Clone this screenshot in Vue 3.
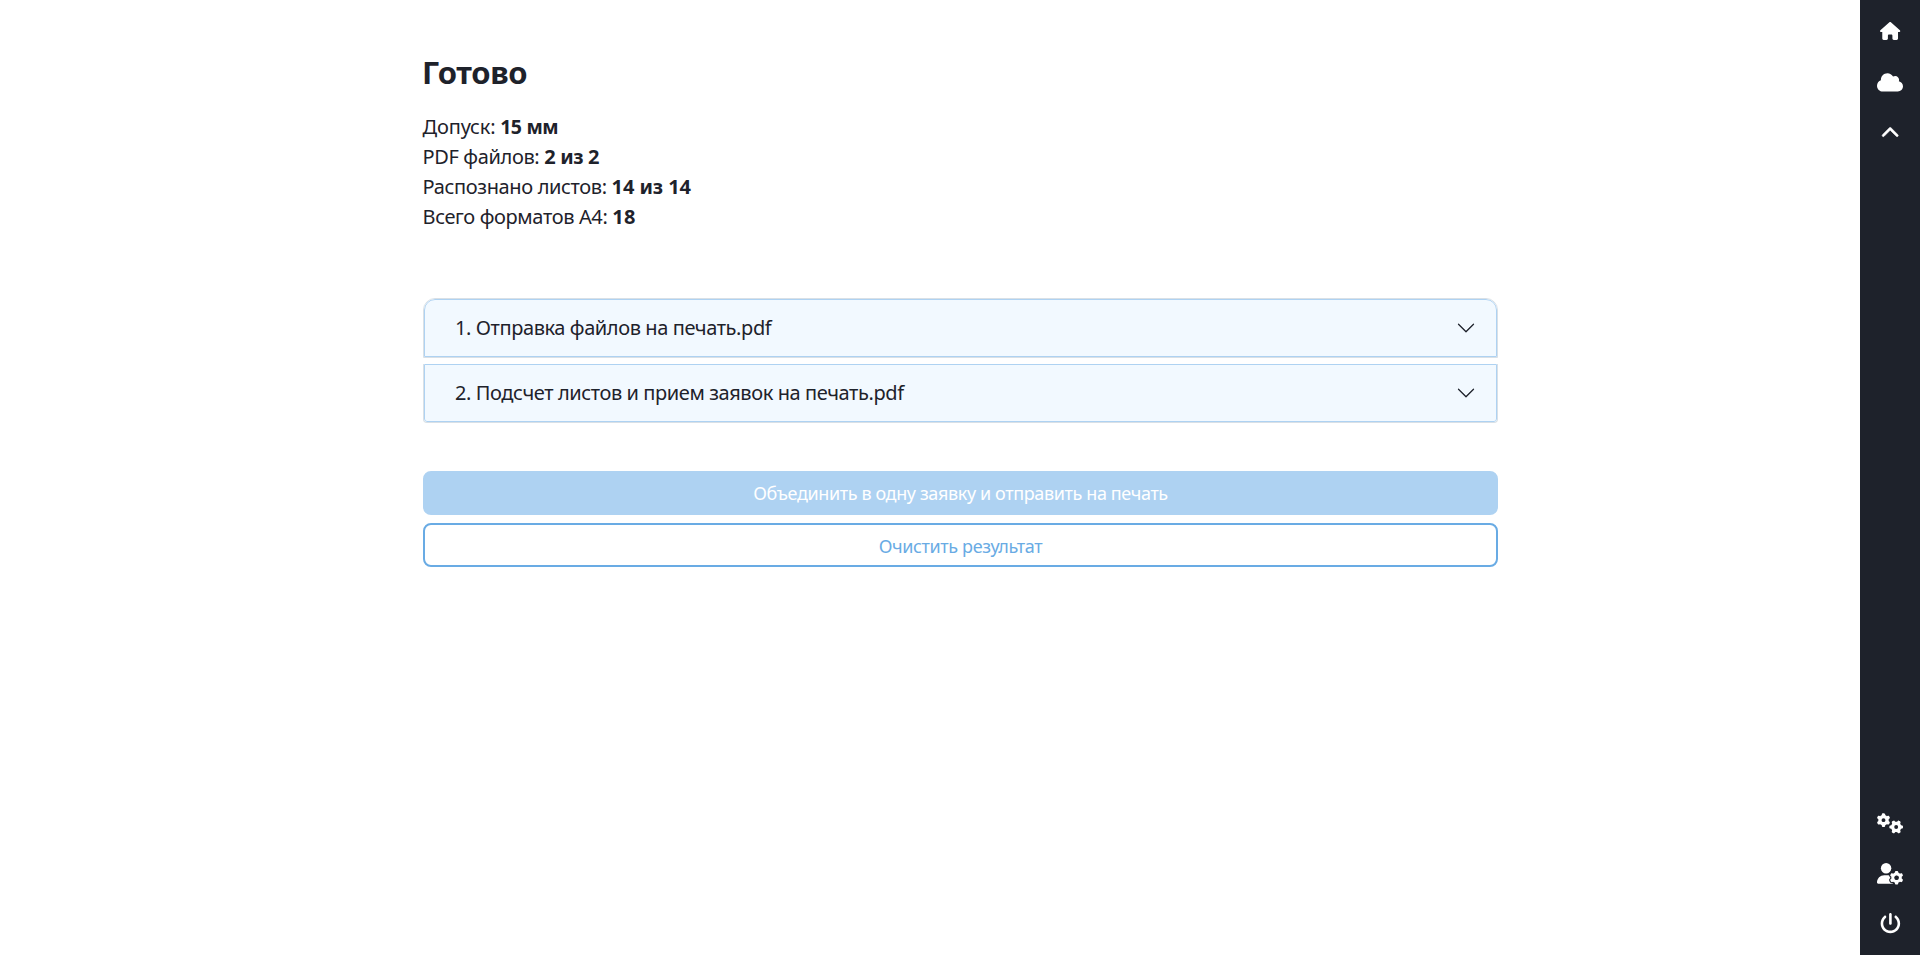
<script setup>
const stats = [
  { label: 'Допуск:', value: '15 мм', cls: 'tolerance' },
  { label: 'PDF файлов:', value: '2 из 2', cls: 'pdfs' },
  { label: 'Распознано листов:', value: '14 из 14', cls: 'sheets' },
  { label: 'Всего форматов А4:', value: '18', cls: 'formats' },
]
const files = ['1. Отправка файлов на печать.pdf', '2. Подсчет листов и прием заявок на печать.pdf']
const gear =
  'M308.5 135.3c7.1-6.3 9.9-16.2 6.2-25c-2.3-5.3-4.8-10.5-7.6-15.5L304 89.4c-3-5-6.3-9.9-9.8-14.6c-5.7-7.6-15.7-10.1-24.7-7.1l-28.2 9.3c-10.7-8.8-23-16-36.2-20.9L199 27.1c-1.9-9.3-9.1-16.7-18.5-17.8C173.9 8.4 167.2 8 160.4 8h-.7c-6.8 0-13.5 .4-20.1 1.2c-9.4 1.1-16.6 8.6-18.5 17.8L115 56.1c-13.3 5-25.5 12.1-36.2 20.9L50.5 67.8c-9-3-19-.5-24.7 7.1c-3.5 4.7-6.8 9.6-9.9 14.6l-3 5.3c-2.8 5-5.3 10.2-7.6 15.6c-3.7 8.7-.9 18.6 6.2 25l22.2 19.8C32.6 161.9 32 168.9 32 176s.6 14.1 1.7 20.9L11.5 216.7c-7.1 6.3-9.9 16.2-6.2 25c2.3 5.3 4.8 10.5 7.6 15.6l3 5.2c3 5.1 6.3 9.9 9.9 14.6c5.7 7.6 15.7 10.1 24.7 7.1l28.2-9.3c10.7 8.8 23 16 36.2 20.9l6.1 29.1c1.9 9.3 9.1 16.7 18.5 17.8c6.7 .8 13.5 1.2 20.4 1.2s13.7-.4 20.4-1.2c9.4-1.1 16.6-8.6 18.5-17.8l6.1-29.1c13.3-5 25.5-12.1 36.2-20.9l28.2 9.3c9 3 19 .5 24.7-7.1c3.5-4.7 6.8-9.5 9.8-14.6l3.1-5.4c2.8-5 5.3-10.2 7.6-15.5c3.7-8.7 .9-18.6-6.2-25l-22.2-19.8c1.1-6.8 1.7-13.8 1.7-20.9s-.6-14.1-1.7-20.9l22.2-19.8zM112 176a48 48 0 1 1 96 0 48 48 0 1 1 -96 0z'
</script>

<template>
  <div class="page">
    <main class="content">
      <h2>Готово</h2>
      <div class="stats">
        <div v-for="s in stats" :key="s.label" :class="s.cls"><span>{{ s.label }}</span>&nbsp;<b>{{ s.value }}</b></div>
      </div>
      <div class="accordion">
        <div v-for="f in files" :key="f" class="item">
          <button class="toggle">
            <span>{{ f }}</span>
            <svg width="20" height="20" viewBox="0 0 16 16"><path d="M1.646 4.646a.5.5 0 0 1 .708 0L8 10.293l5.646-5.647a.5.5 0 0 1 .708.708l-6 6a.5.5 0 0 1-.708 0l-6-6a.5.5 0 0 1 0-.708z" /></svg>
          </button>
        </div>
      </div>
      <div class="actions">
        <button class="btn primary">Объединить в одну заявку и отправить на печать</button>
        <button class="btn outline">Очистить результат</button>
      </div>
    </main>
    <nav class="sidebar">
      <a class="house"><svg width="20.3" height="18" viewBox="0 0 576 512"><path d="M575.8 255.5c0 18-15 32.1-32 32.1h-32l.7 160.2c0 2.7-.2 5.4-.5 8.1V472c0 22.1-17.9 40-40 40H456c-1.1 0-2.2 0-3.3-.1c-1.4 .1-2.8 .1-4.2 .1H416 392c-22.1 0-40-17.9-40-40V448 384c0-17.7-14.3-32-32-32H256c-17.7 0-32 14.3-32 32v64 24c0 22.1-17.9 40-40 40H160 128.1c-1.5 0-3-.1-4.5-.2c-1.2 .1-2.4 .2-3.6 .2H104c-22.1 0-40-17.9-40-40V360c0-.9 0-1.9 .1-2.8V287.6H32c-18 0-32-14-32-32.1c0-9 3-17 10-24L266.4 8c7-7 15-8 22-8s15 2 21 7L564.8 231.5c8 7 12 15 11 24z" /></svg></a>
      <a class="cloud"><svg width="26" height="20.8" viewBox="0 0 640 512"><path d="M0 336c0 79.5 64.5 144 144 144H512c70.7 0 128-57.3 128-128c0-61.9-44-113.6-102.4-125.4c4.1-10.7 6.4-22.4 6.4-34.6c0-53-43-96-96-96c-19.7 0-38.1 6-53.3 16.2C367 64.2 315.3 32 256 32C167.6 32 96 103.6 96 192c0 2.7 .1 5.4 .2 8.1C40.2 219.8 0 273.2 0 336z" /></svg></a>
      <a class="up"><svg width="18.4" height="18.4" viewBox="0 0 512 512"><path d="M233.4 105.4c12.5-12.5 32.8-12.5 45.3 0l192 192c12.5 12.5 12.5 32.8 0 45.3s-32.8 12.5-45.3 0L256 173.3 86.6 342.6c-12.5 12.5-32.8 12.5-45.3 0s-12.5-32.8 0-45.3l192-192z" /></svg></a>
      <a class="gears"><svg width="26" height="20.8" viewBox="0 0 640 512"><path :d="gear" /><path :d="gear" transform="translate(472 344) rotate(90) translate(-160 -176)" /></svg></a>
      <a class="user"><svg width="26" height="20.8" viewBox="0 0 640 512"><circle cx="224" cy="128" r="128" /><path d="M178.3 304h91.4c30 0 58 8 82 22v150l50 36H29.7C13.3 512 0 498.7 0 482.3C0 383.8 79.8 304 178.3 304z" /><g transform="translate(322 186)"><path :d="gear" class="cutout" /><path :d="gear" /><circle cx="160" cy="176" r="56" class="hole" /></g></svg></a>
      <a class="power"><svg width="20.8" height="20.8" viewBox="0 0 512 512"><path d="M288 32c0-17.7-14.3-32-32-32s-32 14.3-32 32V256c0 17.7 14.3 32 32 32s32-14.3 32-32V32zM143.5 120.6c13.6-11.3 15.4-31.5 4.1-45.1s-31.5-15.4-45.1-4.1C49.7 115.4 16 181.8 16 256c0 132.5 107.5 240 240 240s240-107.5 240-240c0-74.2-33.8-140.6-86.6-184.6c-13.6-11.3-33.8-9.4-45.1 4.1s-9.4 33.8 4.1 45.1c38.9 32.3 63.5 81 63.5 135.4c0 97.2-78.8 176-176 176s-176-78.8-176-176c0-54.4 24.7-103.1 63.5-135.4z" /></svg></a>
    </nav>
  </div>
</template>

<style>
body { margin: 0; background: #fff; }
</style>

<style scoped>
.page { display: flex; height: 955px; font-family: "Noto Sans", sans-serif; font-size: 20px; line-height: 30px; color: #1e222b; }
.content { box-sizing: border-box; width: 1075px; margin-left: 423px; padding-top: 52px; }
h2 { margin: 0 0 0 -1px; font-size: 31px; line-height: 40px; font-weight: 700; letter-spacing: -0.4px; }
.stats { margin: 20px 0 0 -0.5px; white-space: nowrap; letter-spacing: -0.36px; }
.tolerance span { letter-spacing: -0.15px; }
.tolerance b { letter-spacing: -0.7px; word-spacing: 1px; font-size: 19.5px; }
.pdfs b { letter-spacing: -0.35px; }
.sheets b { letter-spacing: -0.08px; }
.formats b { letter-spacing: 0.2px; }
.accordion { display: flex; flex-direction: column; gap: 6px; margin-top: 66px; }
.item { box-sizing: border-box; border: 1px solid #d9e0e6; overflow: hidden; }
.item:first-child { height: 60px; border-radius: 12px 12px 0 0; }
.item:last-child { height: 59px; border-top: 0; border-radius: 0 0 4px 4px; }
.toggle { box-sizing: border-box; display: flex; align-items: center; justify-content: space-between; width: 100%; height: 58px; padding: 0 20px 0 30px; border: 1px solid #aed2f2; background: #f2f9ff; color: inherit; font: inherit; letter-spacing: -0.41px; white-space: nowrap; }
.item:first-child .toggle { border-radius: 11px 11px 0 0; }
.item:last-child .toggle { border-radius: 0 0 3px 3px; }
.toggle svg { fill: #1e222b; }
.actions { display: flex; flex-direction: column; gap: 8px; margin-top: 48px; }
.btn { box-sizing: border-box; height: 44px; padding: 0; border: 2px solid #69abe4; border-radius: 8px; font: 400 18px/27px "Noto Sans", sans-serif; letter-spacing: -0.38px; }
.primary { background: #aed2f2; border-color: #aed2f2; color: #fff; }
.outline { padding-top: 2px; background: #fff; color: #69abe4; }
.sidebar { box-sizing: border-box; display: flex; flex-direction: column; align-items: center; width: 60px; margin-left: auto; padding: 22px 0 21px; background: #1e222b; }
.sidebar a { display: flex; }
.sidebar svg { fill: #fff; overflow: visible; }
.cloud { margin-top: 32px; }
.up { margin-top: 31px; }
.up svg { stroke: #fff; stroke-width: 16; }
.gears { margin-top: auto; }
.user { margin-top: 29.4px; }
.power { margin-top: 29px; }
.cutout { stroke: #1e222b; stroke-width: 56; fill: #1e222b; }
.sidebar .hole { fill: #1e222b; }
</style>
